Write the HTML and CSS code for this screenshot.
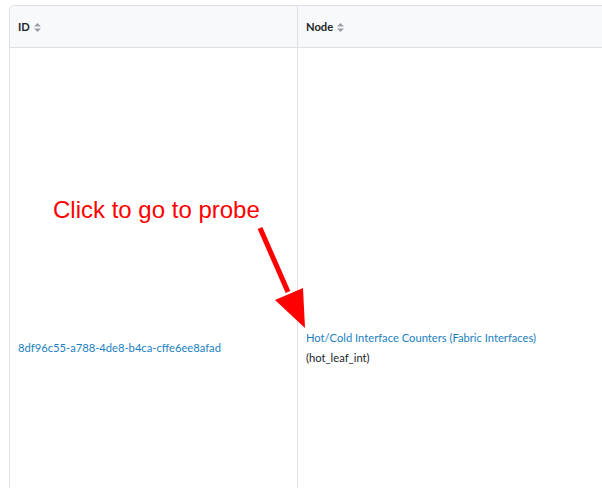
FILE: index.html
```html
<!DOCTYPE html>
<html lang="en">
<head>
    <meta charset="UTF-8">
    <title>Probes</title>
    <link rel="stylesheet" href="styles.css">
</head>
<body>

    <div class="table-wrap">
        <table class="probe-table">
            <thead>
                <tr>
                    <th class="col-id">ID <svg class="sort" width="7" height="9" viewBox="0 0 7 9"><path d="M3.5 0L7 3.6H0Z M3.5 9L7 5.4H0Z" fill="#9aa0a6"/></svg></th>
                    <th class="col-node">Node <svg class="sort" width="7" height="9" viewBox="0 0 7 9"><path d="M3.5 0L7 3.6H0Z M3.5 9L7 5.4H0Z" fill="#9aa0a6"/></svg></th>
                </tr>
            </thead>
            <tbody>
                <tr>
                    <td><a href="#">8df96c55-a788-4de8-b4ca-cffe6ee8afad</a></td>
                    <td>
                        <a href="#">Hot/Cold Interface Counters (Fabric Interfaces)</a><br>
                        (hot_leaf_int)
                    </td>
                </tr>
            </tbody>
        </table>
    </div>

    <div class="callout">
        <span class="callout-text">Click to go to probe</span>
        <svg class="callout-arrow" width="80" height="120" viewBox="0 0 80 120">
            <line x1="10" y1="8" x2="38" y2="72" stroke="#ff0000" stroke-width="5"/>
            <polygon points="25,80 53,68 55,108" fill="#ff0000"/>
        </svg>
    </div>

</body>
</html>
```

FILE: styles.css
```css
body {
    margin: 0;
    font-family: Lato, "Open Sans", sans-serif;
    font-size: 11.2px;
    color: #212529;
    background-color: #fff;
    overflow: hidden;
}
.table-wrap {
    padding: 5px 0 0 9px;
}
.probe-table {
    width: 800px;
    border-collapse: separate;
    border-spacing: 0;
    border: 1px solid #dee2e6;
    border-top-left-radius: 5px;
}
.probe-table th {
    height: 41px;
    padding: 0 8px;
    text-align: left;
    font-weight: 700;
    background-color: #f8f9fa;
    border-bottom: 1px solid #dee2e6;
    border-top-left-radius: 5px;
}
.probe-table th + th {
    border-top-left-radius: 0;
}
.col-id {
    width: 271px;
}
.probe-table th + th,
.probe-table td + td {
    border-left: 1px solid #dee2e6;
}
.probe-table td {
    height: 600px;
    padding: 0 8px;
    vertical-align: middle;
    line-height: 20px;
}
.sort {
    vertical-align: -1px;
    margin-left: 1px;
}
a {
    color: #1a7fc1;
    text-decoration: none;
}
.callout {
    position: absolute;
    left: 0;
    top: 0;
}
.callout-text {
    position: absolute;
    left: 53px;
    top: 196px;
    font-family: "Liberation Sans", Arial, sans-serif;
    font-size: 24px;
    color: #ff0000;
    white-space: nowrap;
}
.callout-arrow {
    position: absolute;
    left: 250px;
    top: 220px;
}
```
